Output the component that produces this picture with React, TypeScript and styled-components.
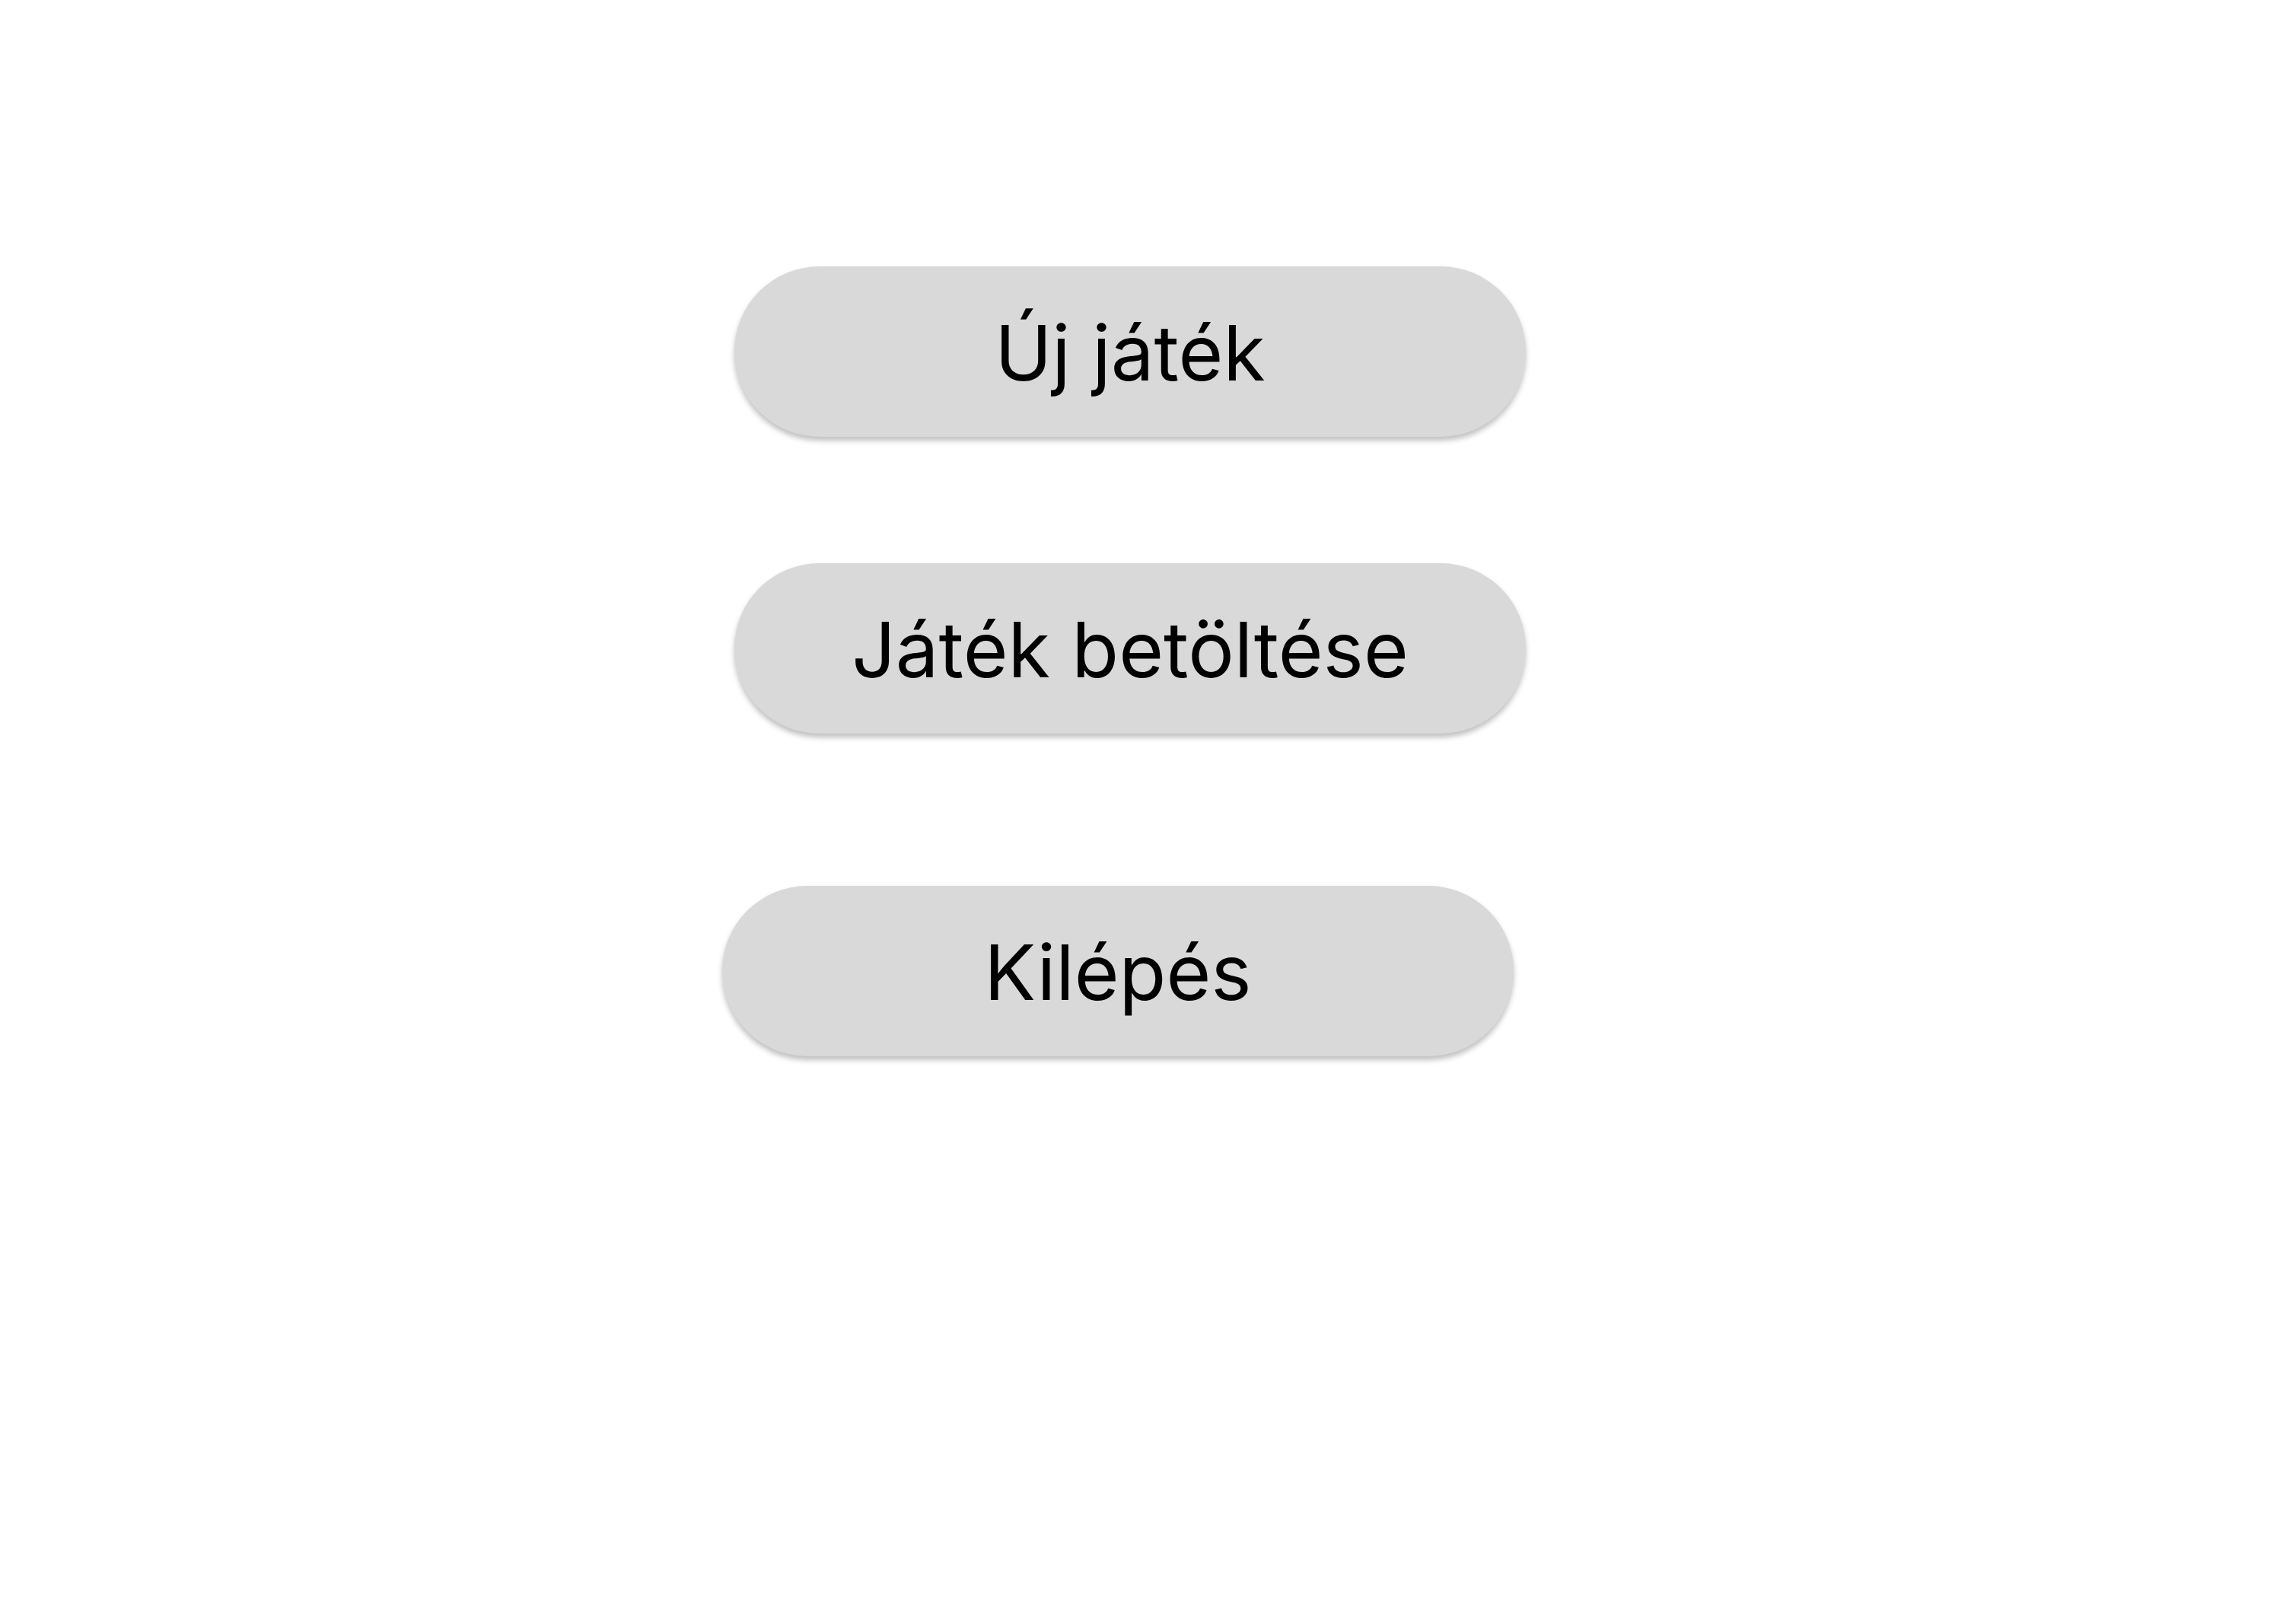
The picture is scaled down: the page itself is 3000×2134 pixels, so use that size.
import React from 'react'
import styled, { createGlobalStyle } from 'styled-components'

const GlobalStyle = createGlobalStyle`
  html, body {
    margin: 0;
    padding: 0;
    background: #ffffff;
  }

  body {
    font-family: Inter, 'Noto Sans', sans-serif;
  }
`

type MenuItem = {
  label: string
  gap: number
  shift?: number
}

const items: MenuItem[] = [
  { label: 'Új játék', gap: 0 },
  { label: 'Játék betöltése', gap: 166 },
  { label: 'Kilépés', gap: 200, shift: -16 },
]

export const App = () => {
  return (
    <>
      <GlobalStyle />
      <Page>
        <Menu>
          {items.map((item) => (
            <MenuButton key={item.label} gap={item.gap} shift={item.shift ?? 0}>
              {item.label}
            </MenuButton>
          ))}
        </Menu>
      </Page>
    </>
  )
}

export default App

const Page = styled.div`
  width: 3000px;
  height: 2134px;
  background: #ffffff;
`

const Menu = styled.div`
  display: flex;
  flex-direction: column;
  align-items: flex-start;
  padding-top: 350px;
  padding-left: 965px;
`

const MenuButton = styled.button<{ gap: number; shift: number }>`
  display: flex;
  align-items: center;
  justify-content: center;

  width: 1040px;
  height: 224px;
  margin-top: ${(props) => props.gap}px;
  margin-left: ${(props) => props.shift}px;
  padding: 2px 0 0;

  border: none;
  border-radius: 112px;
  background: #d9d9d9;
  box-shadow: 0 5px 7px rgba(0, 0, 0, 0.25);

  font-family: Inter, 'Noto Sans', sans-serif;
  font-size: 101px;
  font-weight: 400;
  color: #000000;
  cursor: pointer;
`
